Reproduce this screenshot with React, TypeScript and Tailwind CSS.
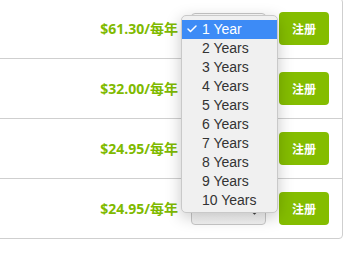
import { Check } from 'lucide-react';

const prices = ['$61.30', '$32.00', '$24.95', '$24.95'];
const years = ['1 Year', '2 Years', '3 Years', '4 Years', '5 Years', '6 Years', '7 Years', '8 Years', '9 Years', '10 Years'];

export default function App() {
  return (
    <div className="relative w-[354px] h-[254px] overflow-hidden bg-white">
      {/* Pricing card */}
      <div className="ml-[-10px] mt-[-2px] w-[353px] border border-[#cfcfcf] rounded-[4px] bg-white">
        {prices.map((price, i) => (
          <div
            key={i}
            className={`h-[59px] flex items-center justify-end pr-[13px] ${i < prices.length - 1 ? 'border-b border-[#cfcfcf] h-[60px]' : ''}`}
          >
            <span
              className="text-[14px] font-bold text-[#7fba00] leading-none"
              style={{ fontFamily: '"Open Sans", "Noto Sans CJK SC", sans-serif' }}
            >
              {price}/每年
            </span>
            <div className="ml-[13px] w-[75px] h-[32px] border border-[#c8c8c8] rounded-[4px] bg-gradient-to-b from-white to-[#f3f3f3] relative">
              <svg className="absolute right-[7px] top-[9px]" width="7" height="13" viewBox="0 0 7 13">
                <path d="M1 4.5 L3.5 2 L6 4.5 M1 8.5 L3.5 11 L6 8.5" fill="none" stroke="#444" strokeWidth="1.2" />
              </svg>
            </div>
            <button
              className="ml-[13px] w-[50px] h-[33px] rounded-[4px] bg-[#84bd00] text-white text-[12px] font-bold"
              style={{ fontFamily: '"Noto Sans CJK SC", sans-serif' }}
            >
              注册
            </button>
          </div>
        ))}
      </div>

      {/* Open select menu */}
      <div
        className="absolute left-[181px] top-[15px] w-[97px] h-[198px] bg-[#f0f0f0] border border-[#c9c9c9] rounded-[5px] shadow-[0_4px_16px_rgba(0,0,0,0.22)] pt-[4px] text-[14px] text-[#333]"
        style={{ fontFamily: '"Liberation Sans", Arial, sans-serif' }}
      >
        {years.map((y, i) => (
          <div
            key={y}
            className={`h-[19px] flex items-center pl-[20px] relative ${i === 0 ? 'bg-[#3d8bf6] text-white' : ''}`}
          >
            {i === 0 && <Check className="absolute left-[4px] top-[3px] w-[12px] h-[12px]" strokeWidth={3} />}
            {y}
          </div>
        ))}
      </div>
    </div>
  );
}
